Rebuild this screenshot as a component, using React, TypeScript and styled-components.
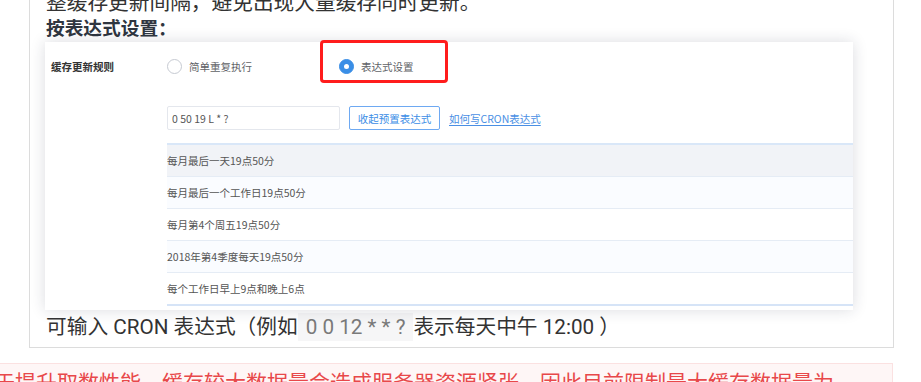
import React from "react";
import styled, { createGlobalStyle } from "styled-components";

const GlobalStyle = createGlobalStyle`
  html, body {
    margin: 0;
    padding: 0;
    background: #fff;
    overflow: hidden;
  }
  body {
    font-family: Roboto, "Noto Sans CJK SC", sans-serif;
  }
`;

const Page = styled.div`
  width: 921px;
  height: 382px;
  overflow: hidden;
`;

const Article = styled.section`
  margin: -10px 0 0 29px;
  width: 865px;
  box-sizing: border-box;
  border: 1px solid #dcdcdc;
  border-top: none;
  padding: 0 16px 7px 16px;
  color: #333;
`;

const Para = styled.p`
  margin: 0;
  font-size: 20.7px;
  line-height: 26px;
  white-space: nowrap;
`;

const Heading = styled.h4`
  margin: 0;
  font-size: 18.7px;
  line-height: 26px;
  font-weight: 700;
  color: #2f3640;
`;

const Code = styled.code`
  font-family: inherit;
  color: #7a7a7a;
  background: #f6f6f7;
  padding: 2px 8px;
`;

/* screenshot card embedded in the doc */
const Card = styled.div`
  position: relative;
  margin: 0 0 4px -1px;
  width: 808px;
  height: 268px;
  background: #fff;
  box-shadow: 0 0 14px rgba(30, 40, 60, 0.16);
  font-family: "Noto Sans CJK SC", sans-serif;
  font-size: 10.5px;
  color: #606266;
`;

const Annotation = styled.div`
  position: absolute;
  left: 275px;
  top: -2px;
  width: 128px;
  height: 43px;
  box-sizing: border-box;
  border: 3px solid #ff1c1c;
  border-radius: 4px;
`;

const FormRow = styled.div<{ $h?: number; $mt?: number }>`
  display: grid;
  grid-template-columns: 122px 1fr;
  align-items: center;
  height: ${(p) => p.$h ?? 24}px;
  margin-top: ${(p) => p.$mt ?? 0}px;
`;

const FieldLabel = styled.div`
  padding-left: 6px;
  font-weight: 700;
  color: #333;
`;

const RadioGroup = styled.div`
  display: flex;
  align-items: center;
`;

const RadioItem = styled.label<{ $mr?: number }>`
  display: flex;
  align-items: center;
  gap: 7px;
  margin-right: ${(p) => p.$mr ?? 0}px;
`;

const RadioDot = styled.span<{ $on?: boolean }>`
  width: 15px;
  height: 15px;
  box-sizing: border-box;
  border-radius: 50%;
  border: 1px solid ${(p) => (p.$on ? "#3a8ee6" : "#c6cad2")};
  background: ${(p) => (p.$on ? "#3a8ee6" : "#fff")};
  display: flex;
  align-items: center;
  justify-content: center;

  &::after {
    content: "";
    width: 5px;
    height: 5px;
    border-radius: 50%;
    background: #fff;
    display: ${(p) => (p.$on ? "block" : "none")};
  }
`;

const Controls = styled.div`
  display: flex;
  align-items: center;
  gap: 9px;
`;

const CronInput = styled.div`
  width: 173px;
  height: 24px;
  box-sizing: border-box;
  border: 1px solid #e4e7ed;
  border-radius: 2px;
  padding-left: 4px;
  display: flex;
  align-items: center;
  color: #555;
`;

const OutlineButton = styled.button`
  width: 91px;
  height: 24px;
  border: 1px solid #6ea9f2;
  border-radius: 2px;
  background: #fff;
  color: #3b8de6;
  font: inherit;
  padding: 0;
`;

const HelpLink = styled.a`
  color: #4a8fe4;
  text-decoration: underline;
  text-underline-offset: 2px;
`;

const PresetTable = styled.div`
  margin: 13px 0 0 122px;
  border-top: 2px solid #d9e7f8;
  border-bottom: 2px solid #d6e4f7;
`;

const PresetRow = styled.div<{ $bg: string }>`
  height: 31px;
  display: flex;
  align-items: center;
  background: ${(p) => p.$bg};
  border-bottom: 1px solid #e5ecf5;
  color: #555;

  &:last-child {
    border-bottom: none;
  }
`;

const Alert = styled.div`
  margin: 15px 0 0 -20px;
  width: 913px;
  box-sizing: border-box;
  border: 1px solid #fbe1e1;
  background: #fef6f6;
  padding: 2px 0 0 13px;
  height: 40px;
  color: #e8484a;
  font-family: "Noto Sans CJK SC", sans-serif;
  font-size: 21px;
  line-height: 30px;
  white-space: nowrap;
`;

const presets = [
  { text: "每月最后一天19点50分", bg: "#f1f3f7" },
  { text: "每月最后一个工作日19点50分", bg: "#fafcff" },
  { text: "每月第4个周五19点50分", bg: "#fff" },
  { text: "2018年第4季度每天19点50分", bg: "#fafcff" },
  { text: "每个工作日早上9点和晚上6点", bg: "#fff" },
];

export default function App() {
  return (
    <Page>
      <GlobalStyle />
      <Article>
        <Para>整缓存更新间隔，避免出现大量缓存同时更新。</Para>
        <Heading>按表达式设置：</Heading>
        <Card>
          <Annotation />
          <FormRow $h={48}>
            <FieldLabel>缓存更新规则</FieldLabel>
            <RadioGroup>
              <RadioItem $mr={87}>
                <RadioDot />
                简单重复执行
              </RadioItem>
              <RadioItem>
                <RadioDot $on />
                表达式设置
              </RadioItem>
            </RadioGroup>
          </FormRow>
          <FormRow $mt={16}>
            <div />
            <Controls>
              <CronInput>0 50 19 L * ?</CronInput>
              <OutlineButton>收起预置表达式</OutlineButton>
              <HelpLink>如何写CRON表达式</HelpLink>
            </Controls>
          </FormRow>
          <PresetTable>
            {presets.map((p) => (
              <PresetRow key={p.text} $bg={p.bg}>
                {p.text}
              </PresetRow>
            ))}
          </PresetTable>
        </Card>
        <Para>
          可输入 CRON 表达式（例如<Code>0 0 12 * * ?</Code>表示每天中午 12:00 ）
        </Para>
      </Article>
      <Alert>于提升取数性能，缓存较大数据量会造成服务器资源紧张，因此目前限制最大缓存数据量为</Alert>
    </Page>
  );
}
